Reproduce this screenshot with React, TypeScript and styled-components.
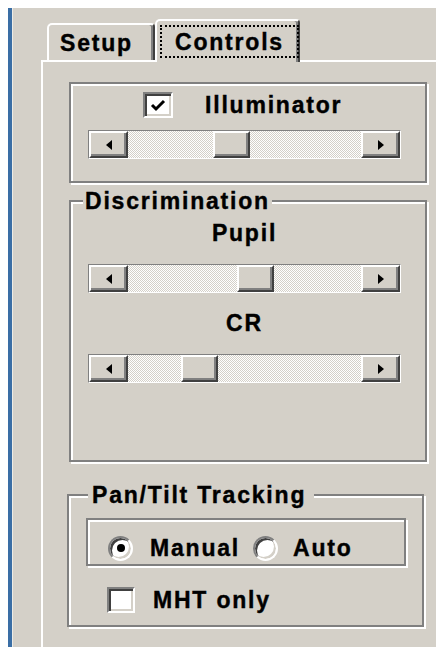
import React from 'react';
import styled, { createGlobalStyle } from 'styled-components';

const face = '#d4d0c8';
const shadow = '#808080';
const dark = '#404040';

const GlobalStyle = createGlobalStyle`
  html, body {
    margin: 0;
    background: #fff;
    overflow: hidden;
  }
  body {
    font-family: "Liberation Sans", Arial, sans-serif;
  }
`;

const Window = styled.div`
  display: flex;
  margin: 8px 0 0 8px;
  width: 428px;
  height: 639px;
  background: ${face};
  overflow: hidden;
`;

const Edge = styled.div`
  flex: none;
  width: 4px;
  background: #3a6ea5;
  border-right: 1px solid #ecebe6;
`;

const Body = styled.div`
  flex: none;
  display: flex;
  flex-direction: column;
  padding: 11px 0 0 28px;
`;

const TabStrip = styled.div`
  display: flex;
  align-items: flex-end;
  height: 41px;
  padding-left: 6px;
  position: relative;
  z-index: 1;
`;

const Tab = styled.div<{ $active?: boolean }>`
  box-sizing: border-box;
  display: flex;
  align-items: ${(p) => (p.$active ? 'flex-start' : 'center')};
  width: ${(p) => (p.$active ? 145 : 108)}px;
  height: ${(p) => (p.$active ? 43 : 37)}px;
  margin-bottom: ${(p) => (p.$active ? -2 : 0)}px;
  padding-left: ${(p) => (p.$active ? 3 : 11)}px;
  padding-top: ${(p) => (p.$active ? 4 : 0)}px;
  background: ${face};
  border: 2px solid;
  border-bottom: none;
  border-color: #fff ${dark} transparent #fff;
  border-radius: 5px 4px 0 0;
  box-shadow: inset -2px 0 0 ${shadow};
`;

const Caption = styled.span`
  font-size: 23px;
  font-weight: 700;
  letter-spacing: 1.8px;
  line-height: 26px;
  color: #000;
  white-space: nowrap;
  -webkit-text-stroke: 0.4px #000;
`;

const FocusRing = styled.span`
  box-sizing: border-box;
  display: flex;
  align-items: center;
  height: 33px;
  padding: 0 13px;
  border: 2px dotted #000;
`;

const Panel = styled.div`
  flex: 1;
  display: flex;
  flex-direction: column;
  width: 400px;
  padding: 20px 0 0 26px;
  border-top: 2px solid #fff;
  border-left: 2px solid #fff;
  background: ${face};
`;

const Frame = styled.fieldset<{ $w: number; $h: number; $shift?: number }>`
  box-sizing: border-box;
  display: flex;
  flex-direction: column;
  width: ${(p) => p.$w}px;
  height: ${(p) => p.$h}px;
  min-width: 0;
  margin: 0 0 0 ${(p) => p.$shift ?? 0}px;
  padding: 0;
  border: 2px solid ${shadow};
  box-shadow: inset 2px 2px 0 #fff, 2px 2px 0 #fff;
`;

const Legend = styled.legend<{ $ml: number; $pr?: number }>`
  margin-left: ${(p) => p.$ml}px;
  padding: 0 ${(p) => p.$pr ?? 2}px 0 ${(p) => (p.$pr ? 4 : 2)}px;
  font-size: 23px;
  font-weight: 700;
  letter-spacing: 1.8px;
  line-height: 24px;
  color: #000;
  background: ${face};
  -webkit-text-stroke: 0.4px #000;
`;

const Row = styled.div<{ $pl: number; $mt?: number }>`
  display: flex;
  align-items: center;
  padding-left: ${(p) => p.$pl}px;
  margin-top: ${(p) => p.$mt ?? 0}px;
`;

const Gap = styled.span<{ $w: number }>`
  display: inline-block;
  width: ${(p) => p.$w}px;
  flex: none;
`;

const SliderTitle = styled.div<{ $mt: number }>`
  width: 313px;
  margin: ${(p) => p.$mt}px 0 0 17px;
  text-align: center;
  font-size: 23px;
  font-weight: 700;
  letter-spacing: 1.8px;
  line-height: 26px;
  color: #000;
  -webkit-text-stroke: 0.4px #000;
`;

const Box = styled.span<{ $w: number; $h: number }>`
  box-sizing: border-box;
  flex: none;
  display: flex;
  align-items: center;
  justify-content: center;
  width: ${(p) => p.$w}px;
  height: ${(p) => p.$h}px;
  background: #fff;
  border: 2px solid;
  border-color: ${shadow} #fff #fff ${shadow};
  box-shadow: inset 2px 2px 0 ${dark}, inset -2px -2px 0 ${face};
`;

const Radio = styled.span<{ $on?: boolean }>`
  box-sizing: border-box;
  flex: none;
  display: flex;
  align-items: center;
  justify-content: center;
  width: 25px;
  height: 25px;
  border-radius: 50%;
  background: #fff;
  border: 2px solid;
  border-color: ${shadow} #fff #fff ${shadow};
  box-shadow: inset 2px 2px 0 ${dark}, inset -2px -2px 0 ${face};

  &::after {
    content: '';
    display: ${(p) => (p.$on ? 'block' : 'none')};
    width: 8px;
    height: 8px;
    border-radius: 50%;
    background: #000;
  }
`;

const Inset = styled.div`
  box-sizing: border-box;
  display: flex;
  align-items: center;
  width: 320px;
  height: 48px;
  margin: 11px 0 0 17px;
  padding: 12px 0 0 20px;
  border: 2px solid ${shadow};
  box-shadow: inset 2px 2px 0 #fff, 2px 2px 0 #fff;
`;

const Scroll = styled.div<{ $mt: number }>`
  box-sizing: border-box;
  display: flex;
  width: 313px;
  height: 29px;
  margin: ${(p) => p.$mt}px 0 0 17px;
  border: 1px solid;
  border-color: ${shadow} #fff #fff ${shadow};
`;

const Raised = styled.div<{ $w: number }>`
  box-sizing: border-box;
  flex: none;
  display: flex;
  align-items: center;
  justify-content: center;
  width: ${(p) => p.$w}px;
  height: 100%;
  background: ${face};
  border: 2px solid;
  border-color: #fff ${dark} ${dark} #fff;
  box-shadow: inset -2px -2px 0 ${shadow};
`;

const Track = styled.div`
  flex: 1;
  display: flex;
  background: repeating-conic-gradient(${face} 0 25%, #fff 0 50%) 0 0 / 2px 2px;
`;

const Arrow = ({ dir }: { dir: 'left' | 'right' }) => (
  <svg width="6" height="10" viewBox="0 0 6 10">
    <polygon points={dir === 'left' ? '6,0 6,10 0,5' : '0,0 0,10 6,5'} fill="#000" />
  </svg>
);

const Check = () => (
  <svg width="16" height="13" viewBox="0 0 16 13">
    <polyline points="2,6 6,10 14,2" fill="none" stroke="#000" strokeWidth="3" />
  </svg>
);

const THUMB = 37;
const TRACK = 235;

const ScrollBar = ({ at, mt }: { at: number; mt: number }) => (
  <Scroll $mt={mt}>
    <Raised $w={39}>
      <Arrow dir="left" />
    </Raised>
    <Track>
      <Raised $w={THUMB} style={{ marginLeft: Math.round(at * (TRACK - THUMB)) }} />
    </Track>
    <Raised $w={39}>
      <Arrow dir="right" />
    </Raised>
  </Scroll>
);

export default function App() {
  return (
    <>
      <GlobalStyle />
      <Window>
        <Edge />
        <Body>
          <TabStrip>
            <Tab>
              <Caption>Setup</Caption>
            </Tab>
            <Tab $active>
              <FocusRing>
                <Caption>Controls</Caption>
              </FocusRing>
            </Tab>
          </TabStrip>
          <Panel>
            <Frame $w={358} $h={101}>
              <Row $pl={72} $mt={8}>
                <Box $w={30} $h={26}>
                  <Check />
                </Box>
                <Gap $w={32} />
                <Caption>Illuminator</Caption>
              </Row>
              <ScrollBar at={0.43} mt={12} />
            </Frame>

            <Frame $w={358} $h={273} style={{ marginTop: 6 }}>
              <Legend $ml={12}>Discrimination</Legend>
              <SliderTitle $mt={7}>Pupil</SliderTitle>
              <ScrollBar at={0.55} mt={18} />
              <SliderTitle $mt={17}>CR</SliderTitle>
              <ScrollBar at={0.27} mt={18} />
            </Frame>

            <Frame $w={357} $h={144} $shift={-2} style={{ marginTop: 21 }}>
              <Legend $ml={19} $pr={8}>Pan/Tilt Tracking</Legend>
              <Inset>
                <Radio $on />
                <Gap $w={17} />
                <Caption>Manual</Caption>
                <Gap $w={13} />
                <Radio />
                <Gap $w={15} />
                <Caption>Auto</Caption>
              </Inset>
              <Row $pl={38} $mt={21}>
                <Box $w={28} $h={26} />
                <Gap $w={18} />
                <Caption>MHT only</Caption>
              </Row>
            </Frame>
          </Panel>
        </Body>
      </Window>
    </>
  );
}
